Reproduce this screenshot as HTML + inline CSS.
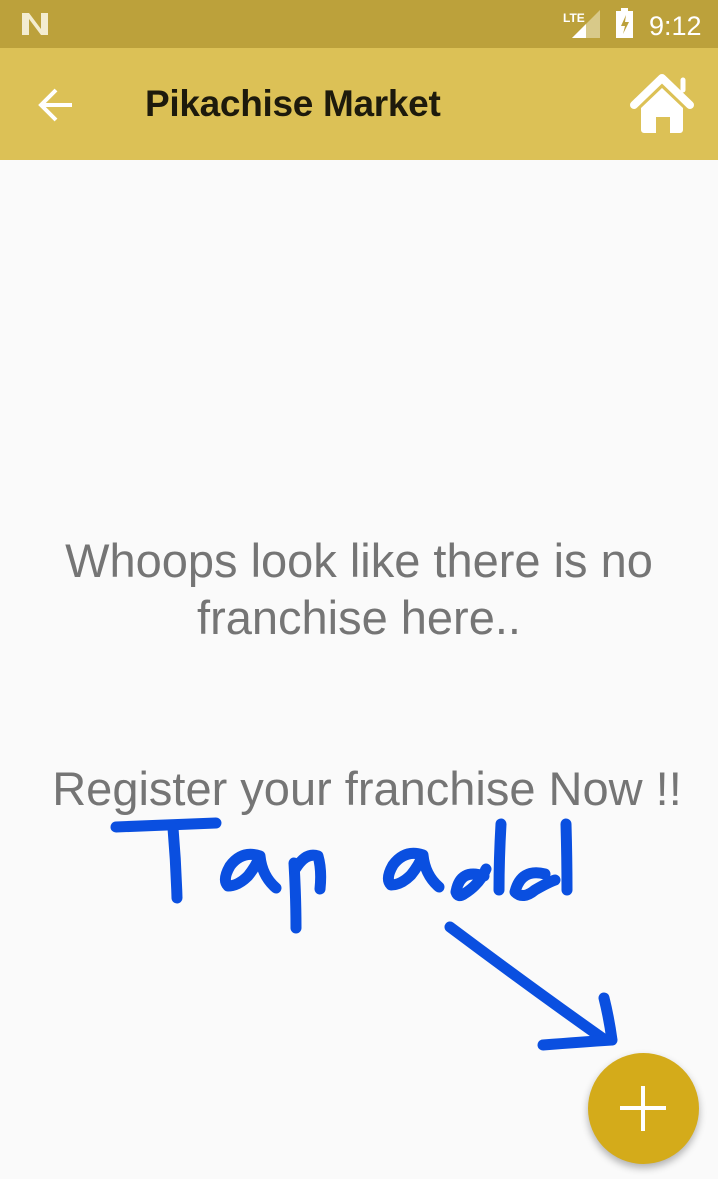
<!DOCTYPE html>
<html><head><meta charset="utf-8"><style>
body{margin:0;width:718px;height:1179px;background:#fafafa;position:relative;overflow:hidden;font-family:"Liberation Sans",Roboto,sans-serif}
.sb{position:absolute;top:0;left:0;width:718px;height:48px;background:#bca13b}
.ab{position:absolute;top:48px;left:0;width:718px;height:112px;background:#dcc156}
.title{position:absolute;left:145px;top:83px;font-size:37px;font-weight:bold;color:#1d1a0c;letter-spacing:-0.3px}
.t{position:absolute;left:0;width:718px;text-align:center;color:#757575;font-size:47px;line-height:57px;white-space:nowrap}
.fab{position:absolute;left:588px;top:1053px;width:111px;height:111px;border-radius:50%;background:#d4ab1a;box-shadow:0 4px 8px rgba(0,0,0,.3)}
</style></head><body>
<div class="sb"></div>
<svg style="position:absolute;left:0;top:0" width="718" height="48">
<path d="M22 13h7l12 16V13h7v22h-7L29 19v16h-7z" fill="#f3ecd0"/>
<text x="563" y="22" font-size="12" font-weight="bold" fill="#fff" font-family="Liberation Sans">LTE</text>
<polygon points="600,10 600,38 572,38" fill="#d8c989"/>
<polygon points="586,24 586,38 572,38" fill="#fff"/>
<rect x="616" y="11" width="17" height="27" fill="#fff"/><rect x="621" y="8" width="7" height="4" fill="#fff"/>
<path d="M626 15l-5 11h4l-2 8 6-12h-4z" fill="#bca13b"/>
<text x="649" y="35" font-size="27" fill="#fff" font-family="Liberation Sans">9:12</text>
</svg>
<div class="ab"></div>
<svg style="position:absolute;left:38px;top:87px" width="36" height="36"><path d="M3 18h31M18 3L3 18l15 15" stroke="#fff" stroke-width="4" fill="none"/></svg>
<div class="title">Pikachise Market</div>
<svg style="position:absolute;left:628px;top:72px" width="70" height="64"><path d="M6 33L34 6l28 27" stroke="#fff" stroke-width="8" stroke-linecap="round" stroke-linejoin="round" fill="none"/><path d="M55 18V8" stroke="#fff" stroke-width="5" stroke-linecap="round"/><path d="M13 36L34 16l21 20v22a3 3 0 0 1-3 3H42V45H28v16H16a3 3 0 0 1-3-3z" fill="#fff"/></svg>
<div class="t" style="top:532px">Whoops look like there is no<br>franchise here..</div>
<div class="t" style="top:760px;left:8px">Register your franchise Now !!</div>
<svg style="position:absolute;left:0;top:0" width="718" height="1179"><g stroke="#0a4fe0" stroke-width="11" stroke-linecap="round" stroke-linejoin="round" fill="none">
<path d="M116 827q50-2 100-4"/><path d="M173 828q3 35 4 70"/>
<path d="M260 856q-18-6-30 10q-8 14-2 20q10 0 20-10q8-10 12-20q2 20 16 32"/>
<path d="M294 863q2 35 2 65"/><path d="M296 868q10-16 22-12q4 14 2 33"/>
<path d="M423 855q-18-6-30 10q-8 14-2 20q10 0 20-10q8-10 12-20q2 20 16 32"/>
<path d="M484 876q-24-8-28 16q2 6 8 2q16-10 22-25"/><path d="M501 824q-2 35-2 66"/>
<path d="M545 874q-24-6-30 18q8 8 20-2q14-8 20-10"/><path d="M566 824q1 35 1 66"/>
<path d="M450 927q80 60 155 113"/><path d="M604 998q5 20 8 42q-30 2-69 5"/>
</g></svg>
<div class="fab"><svg width="111" height="111"><path d="M55 33v45M32 55h46" stroke="#fff" stroke-width="4"/></svg></div>
</body></html>
